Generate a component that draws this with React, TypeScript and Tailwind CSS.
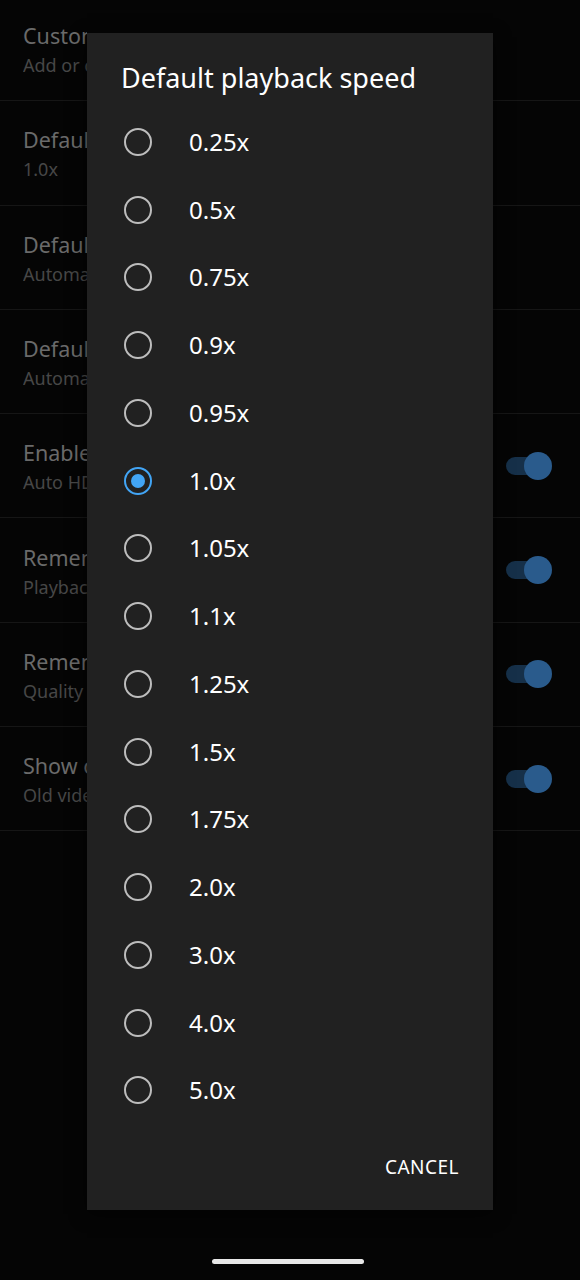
import React from "react";

const rows = [
  { title: "Custom playback speeds", sub: "Add or change the available playback speeds" },
  { title: "Default playback speed", sub: "1.0x" },
  { title: "Default video quality on Wi-Fi network", sub: "Automatic" },
  { title: "Default video quality on mobile network", sub: "Automatic" },
  { title: "Enable HDR auto brightness", sub: "Auto HDR brightness is enabled", toggle: true },
  { title: "Remember playback speed changes", sub: "Playback speed changes apply to all videos", toggle: true },
  { title: "Remember video quality changes", sub: "Quality changes apply to all videos", toggle: true },
  { title: "Show old video quality menu", sub: "Old video quality menu is shown", toggle: true },
];

const speeds = ["0.25x", "0.5x", "0.75x", "0.9x", "0.95x", "1.0x", "1.05x", "1.1x", "1.25x", "1.5x", "1.75x", "2.0x", "3.0x", "4.0x", "5.0x"];

function Radio({ checked }: { checked: boolean }) {
  return checked ? (
    <span className="grid h-[28px] w-[28px] place-items-center rounded-full border-[2.5px] border-[#42a5f5]">
      <span className="h-[14px] w-[14px] rounded-full bg-[#42a5f5]" />
    </span>
  ) : (
    <span className="h-[28px] w-[28px] rounded-full border-[2.5px] border-[#bdbdbd]" />
  );
}

export default function App() {
  return (
    <div className="relative h-[1280px] w-[580px] overflow-hidden bg-[#050505] font-['Noto_Sans',sans-serif]">
      <div className="-mt-[3px]">
        {rows.map((row) => (
          <div key={row.title} className="flex h-[104.3px] items-center justify-between border-b border-[#161616] pl-[23px] pr-[28px]">
            {/* the dialog covers the rest of these labels */}
            <div className="w-[64px] overflow-hidden whitespace-nowrap pt-[2px]">
              <div className="text-[21.5px] leading-[28px] text-[#6a6a6a]">{row.title}</div>
              <div className="mt-[3px] text-[18px] leading-[24px] text-[#474747]">{row.sub}</div>
            </div>
            {row.toggle ? (
              <div className="relative flex h-[28px] w-[46px] items-center">
                <span className="h-[18px] w-[38px] rounded-full bg-[#163049]" />
                <span className="absolute right-0 h-[28px] w-[28px] rounded-full bg-[#2a5b8c]" />
              </div>
            ) : null}
          </div>
        ))}
      </div>

      <div className="absolute left-[87px] top-[33px] flex h-[1177px] w-[406px] flex-col bg-[#212121] shadow-[0_4px_16px_rgba(0,0,0,0.6)]">
        <div className="pl-[34px] pt-[28px] text-[27px] leading-[34px] text-white">Default playback speed</div>
        <div className="mt-[13px]">
          {speeds.map((s) => (
            <div key={s} className="flex h-[67.75px] items-center pl-[37px]">
              <Radio checked={s === "1.0x"} />
              <span className="ml-[37px] text-[24px] text-white">{s}</span>
            </div>
          ))}
        </div>
        <div className="mt-auto flex justify-end pb-[30px] pr-[34px]">
          <span className="text-[19px] leading-[26px] tracking-[0.5px] text-white">CANCEL</span>
        </div>
      </div>

      <div className="absolute bottom-[16px] left-[212px] h-[5px] w-[152px] rounded-full bg-[#e8e8e8]" />
    </div>
  );
}
